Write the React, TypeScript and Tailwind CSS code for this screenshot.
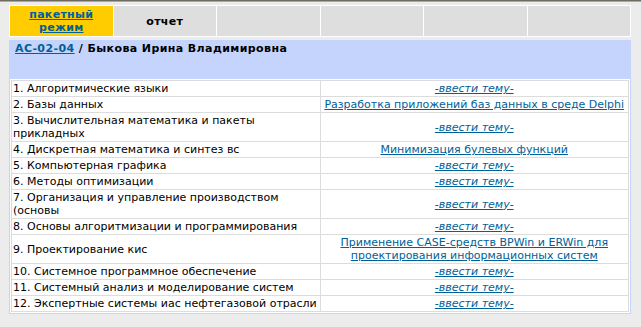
import React from 'react'

const LINK = 'text-[#006098] underline'

type Row = { name: string[]; topic?: string[] }

const ROWS: Row[] = [
  { name: ['1. Алгоритмические языки'] },
  { name: ['2. Базы данных'], topic: ['Разработка приложений баз данных в среде Delphi'] },
  { name: ['3. Вычислительная математика и пакеты', 'прикладных'] },
  { name: ['4. Дискретная математика и синтез вс'], topic: ['Минимизация булевых функций'] },
  { name: ['5. Компьютерная графика'] },
  { name: ['6. Методы оптимизации'] },
  { name: ['7. Организация и управление производством', '(основы'] },
  { name: ['8. Основы алгоритмизации и программирования'] },
  {
    name: ['9. Проектирование кис'],
    topic: ['Применение CASE-средств BPWin и ERWin для', 'проектирования информационных систем'],
  },
  { name: ['10. Системное программное обеспечение'] },
  { name: ['11. Системный анализ и моделирование систем'] },
  { name: ['12. Экспертные системы иас нефтегазовой отрасли'] },
]

function Lines({ lines }: { lines: string[] }) {
  return (
    <>
      {lines.map((l, i) => (
        <span key={i} className="block whitespace-nowrap">
          {l}
        </span>
      ))}
    </>
  )
}

export default function App() {
  return (
    <div className="w-[641px] h-[327px] overflow-hidden bg-[#ececec] text-[11px] leading-[13px] text-black [font-family:'DejaVu_Sans',Verdana,sans-serif]">
      {/* top edge */}
      <div className="h-px bg-[#6f6b61]" />
      <div className="h-px bg-[#aaa79d]" />

      <div className="pt-[3px] pl-[9px]">
        {/* tabs */}
        <div className="grid grid-cols-6 gap-px p-px bg-white w-[622px]">
          <div className="h-[30px] bg-[#ffcc00] flex items-center justify-center text-center font-bold tracking-[0.3px]">
            <a className={LINK}>
              пакетный
              <br />
              режим
            </a>
          </div>
          <div className="h-[30px] bg-[#dedede] flex items-center justify-center font-bold tracking-[0.3px]">отчет</div>
          <div className="h-[30px] bg-[#dedede]" />
          <div className="h-[30px] bg-[#dedede]" />
          <div className="h-[30px] bg-[#dedede]" />
          <div className="h-[30px] bg-[#dedede]" />
        </div>

        {/* student box */}
        <div className="mt-[3px] w-[622px] border border-[#c4d4fc] bg-white">
          <div className="h-[38px] bg-[#c4d4fc] pl-[5px] pt-px font-bold tracking-[0.4px]">
            <a className={LINK}>АС-02-04</a> / Быкова Ирина Владимировна
          </div>
          <div className="p-px">
            <table className="w-full border-collapse table-fixed">
              <tbody>
                {ROWS.map((r, i) => (
                  <tr key={i}>
                    <td className="w-1/2 border border-[#dcdcdc] px-px py-px align-middle overflow-hidden">
                      <Lines lines={r.name} />
                    </td>
                    <td className="w-1/2 border border-[#dcdcdc] px-px py-px align-middle text-center">
                      {r.topic ? (
                        <a className={LINK}>
                          {r.topic.map((t, j) => (
                            <React.Fragment key={j}>
                              {j > 0 && <br />}
                              {t}
                            </React.Fragment>
                          ))}
                        </a>
                      ) : (
                        <a className={`${LINK} italic`}>-ввести тему-</a>
                      )}
                    </td>
                  </tr>
                ))}
              </tbody>
            </table>
          </div>
        </div>
      </div>
    </div>
  )
}
